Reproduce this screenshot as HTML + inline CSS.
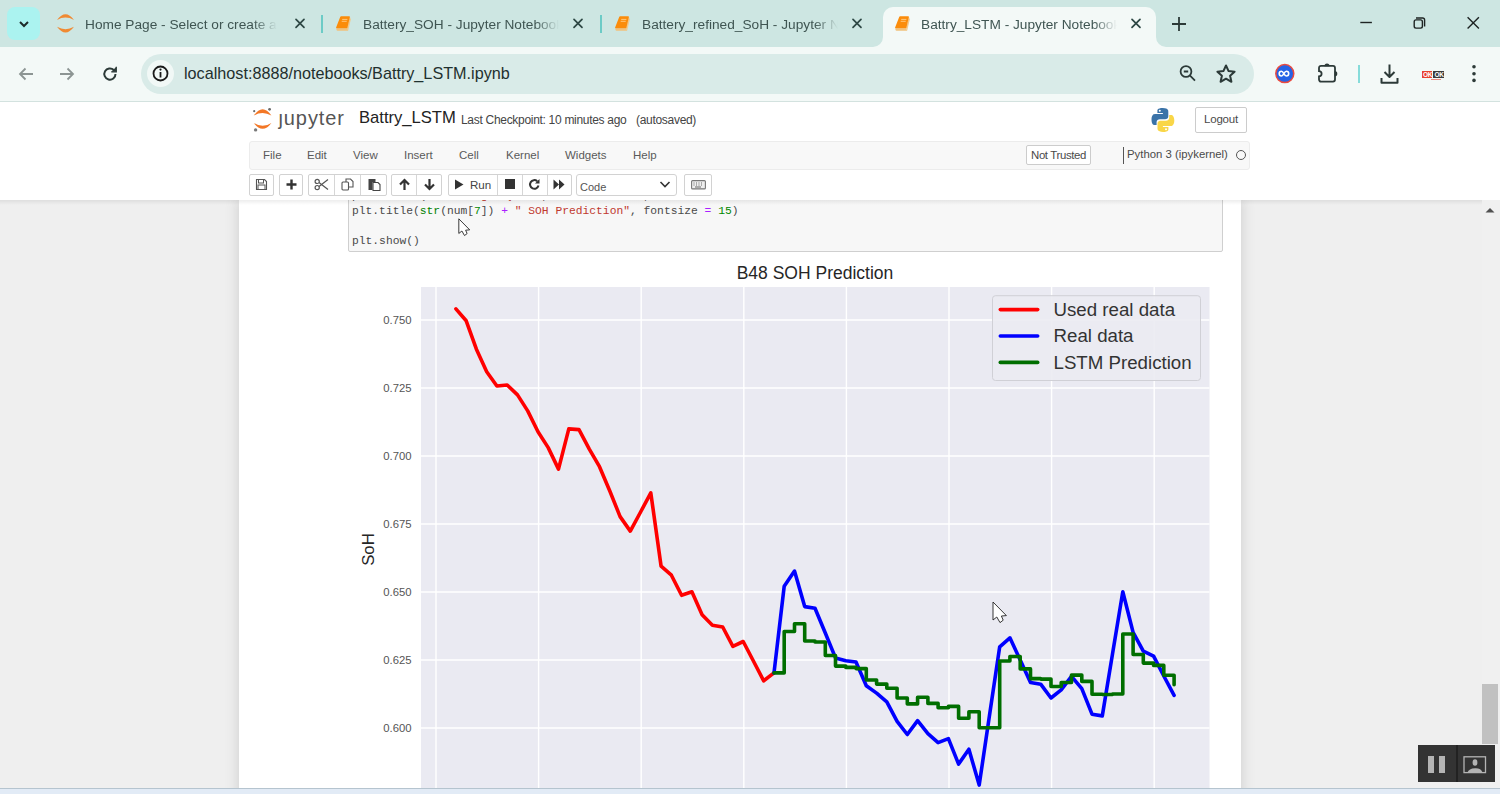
<!DOCTYPE html>
<html><head><meta charset="utf-8">
<style>
*{box-sizing:border-box}
html,body{margin:0;padding:0}
body{width:1500px;height:794px;overflow:hidden;position:relative;background:#eeeeee;font-family:"Liberation Sans",sans-serif}
.abs{position:absolute}
#tabstrip{left:0;top:0;width:1500px;height:47px;background:#cde6e2}
#toolbar{left:0;top:47px;width:1500px;height:55px;background:#f3f9f7;border-bottom:1px solid #d3e2df}
.tabtxt{position:absolute;top:16px;-webkit-mask-image:linear-gradient(90deg,#000 calc(100% - 24px),transparent);mask-image:linear-gradient(90deg,#000 calc(100% - 24px),transparent);font-size:13.7px;color:#3f5552;white-space:nowrap;overflow:hidden;line-height:18px}
.sep{position:absolute;top:15px;width:2px;height:18px;background:#6ccbc6}
#omni{left:141px;top:54px;width:1113px;height:40px;border-radius:20px;background:#d9ebe8}
#jhdr{left:0;top:102px;width:1500px;height:98px;background:#fff}
#menubar{left:249px;top:141px;width:1001px;height:29px;background:#f8f8f8;border:1px solid #ececec;border-radius:3px}
.mi{position:absolute;top:6px;font-size:11.5px;color:#5a5a5a;line-height:14px}
.btn{position:absolute;top:174px;height:22px;border:1px solid #d2d2d2;border-radius:2px;background:#fff}
#site{left:0;top:200px;width:1500px;height:588px;background:#efefef}
#container{left:239px;top:200px;width:1002px;height:588px;background:#fff;box-shadow:0 0 12px 1px rgba(87,87,87,0.2)}
#code{left:348px;top:180px;width:874px;height:72px;background:#f7f7f7;border:1px solid #cfcfcf;border-radius:2px}
.code{position:absolute;font-family:"Liberation Mono",monospace;font-size:11.3px;color:#4a4a4a;white-space:pre;line-height:15px}
#bottom{left:0;top:788px;width:1500px;height:6px;background:#e2ebf6;border-top:1px solid #b5c4cf}
</style></head><body>
<div id="tabstrip" class="abs">
  <div class="abs" style="left:7px;top:7px;width:33px;height:33px;border-radius:8px;background:#abf3f0"></div>
  <svg class="abs" style="left:16px;top:16px" width="16" height="16" viewBox="0 0 16 16"><path d="M4 6l4 4 4-4" fill="none" stroke="#1d2b2a" stroke-width="2"/></svg>
  <!-- tab1 -->
  <svg class="abs" style="left:56px;top:14px" width="19" height="19" viewBox="0 0 19 19"><path d="M1 6Q9.5 -5.5 18 6Q9.5 1.2 1 6z" fill="#f08a33"/><path d="M1 12.8Q9.5 24.3 18 12.8Q9.5 17.6 1 12.8z" fill="#f08a33"/></svg>
  <div class="tabtxt" style="left:85px;width:192px">Home Page - Select or create a</div>
  <div class="abs" style="left:292px;top:16px;width:16px;height:16px;font-size:0"><svg width="16" height="16" viewBox="0 0 16 16"><path d="M4 3.4l8 8M12 3.4l-8 8" stroke="#2d4744" stroke-width="1.7" stroke-linecap="round"/></svg></div>
  <div class="sep" style="left:321px"></div>
  <!-- tab2 -->
  <svg class="abs book" style="left:333px;top:15px" width="19" height="18" viewBox="0 0 19 18"><path d="M16.8 1.6L17.8 4.6L15.2 15.6L14.2 13z" fill="#f3c88a"/><path d="M3.4 13.2H14.3L15.2 15.8H4.4a1.2 1.2 0 0 1-1-1.2z" fill="#f1c27e"/><path d="M8.2 1.2H16.2a.7.7 0 0 1 .7.8L14.3 13.2H3.6a.6.6 0 0 1-.5-.7L7.3 1.8a.9.9 0 0 1 .9-.6z" fill="#fb8c0a"/><path d="M9.2 4.4h5.2M8.7 6.3h5" stroke="#ffcf8a" stroke-width="0.9"/></svg>
  <div class="tabtxt" style="left:363px;width:196px">Battery_SOH - Jupyter Notebook</div>
  <div class="abs" style="left:570px;top:16px;width:16px;height:16px;font-size:0"><svg width="16" height="16" viewBox="0 0 16 16"><path d="M4 3.4l8 8M12 3.4l-8 8" stroke="#2d4744" stroke-width="1.7" stroke-linecap="round"/></svg></div>
  <div class="sep" style="left:600px"></div>
  <!-- tab3 -->
  <svg class="abs book" style="left:612px;top:15px" width="19" height="18" viewBox="0 0 19 18"><path d="M16.8 1.6L17.8 4.6L15.2 15.6L14.2 13z" fill="#f3c88a"/><path d="M3.4 13.2H14.3L15.2 15.8H4.4a1.2 1.2 0 0 1-1-1.2z" fill="#f1c27e"/><path d="M8.2 1.2H16.2a.7.7 0 0 1 .7.8L14.3 13.2H3.6a.6.6 0 0 1-.5-.7L7.3 1.8a.9.9 0 0 1 .9-.6z" fill="#fb8c0a"/><path d="M9.2 4.4h5.2M8.7 6.3h5" stroke="#ffcf8a" stroke-width="0.9"/></svg>
  <div class="tabtxt" style="left:642px;width:196px">Battery_refined_SoH - Jupyter Notebook</div>
  <div class="abs" style="left:849px;top:16px;width:16px;height:16px;font-size:0"><svg width="16" height="16" viewBox="0 0 16 16"><path d="M4 3.4l8 8M12 3.4l-8 8" stroke="#2d4744" stroke-width="1.7" stroke-linecap="round"/></svg></div>
  <!-- active tab -->
  <div class="abs" style="left:883px;top:7px;width:273px;height:40px;background:#f3f9f7;border-radius:10px 10px 0 0"></div>
  <svg class="abs" style="left:873px;top:37px" width="10" height="10" viewBox="0 0 10 10"><path d="M0 10A10 10 0 0 0 10 0V10z" fill="#f3f9f7"/></svg>
  <svg class="abs" style="left:1156px;top:37px" width="10" height="10" viewBox="0 0 10 10"><path d="M10 10A10 10 0 0 1 0 0V10z" fill="#f3f9f7"/></svg>
  <svg class="abs book" style="left:892px;top:15px" width="19" height="18" viewBox="0 0 19 18"><path d="M16.8 1.6L17.8 4.6L15.2 15.6L14.2 13z" fill="#f3c88a"/><path d="M3.4 13.2H14.3L15.2 15.8H4.4a1.2 1.2 0 0 1-1-1.2z" fill="#f1c27e"/><path d="M8.2 1.2H16.2a.7.7 0 0 1 .7.8L14.3 13.2H3.6a.6.6 0 0 1-.5-.7L7.3 1.8a.9.9 0 0 1 .9-.6z" fill="#fb8c0a"/><path d="M9.2 4.4h5.2M8.7 6.3h5" stroke="#ffcf8a" stroke-width="0.9"/></svg>
  <div class="tabtxt" style="left:921px;width:196px">Battry_LSTM - Jupyter Notebook</div>
  <div class="abs" style="left:1128px;top:16px;width:16px;height:16px;font-size:0"><svg width="16" height="16" viewBox="0 0 16 16"><path d="M4 3.4l8 8M12 3.4l-8 8" stroke="#2d4744" stroke-width="1.7" stroke-linecap="round"/></svg></div>
  <svg class="abs" style="left:1170px;top:15px" width="18" height="18" viewBox="0 0 18 18"><path d="M9 2v14M2 9h14" stroke="#2c3a38" stroke-width="1.8"/></svg>
  <svg class="abs" style="left:1357px;top:14px" width="18" height="18" viewBox="0 0 18 18"><path d="M3.3 8.5H14.9" stroke="#1e2423" stroke-width="1.4"/></svg>
  <svg class="abs" style="left:1409px;top:14px" width="18" height="18" viewBox="0 0 18 18"><rect x="5.2" y="5.9" width="8.2" height="8.2" rx="1.8" fill="none" stroke="#1e2423" stroke-width="1.4"/><path d="M7 4H13.6a2 2 0 0 1 2 2V12.5" fill="none" stroke="#1e2423" stroke-width="1.4"/></svg>
  <svg class="abs" style="left:1463px;top:14px" width="18" height="18" viewBox="0 0 18 18"><path d="M4.6 3.3l11.3 11.3M15.9 3.3L4.6 14.6" stroke="#1e2423" stroke-width="1.4"/></svg>
</div>
<div id="toolbar" class="abs">
  <svg class="abs" style="left:16px;top:17px" width="20" height="20" viewBox="0 0 20 20"><path d="M17 10H4M9.5 4.5L4 10l5.5 5.5" fill="none" stroke="#8c9593" stroke-width="1.8"/></svg>
  <svg class="abs" style="left:57px;top:17px" width="20" height="20" viewBox="0 0 20 20"><path d="M3 10h13M10.5 4.5L16 10l-5.5 5.5" fill="none" stroke="#8c9593" stroke-width="1.8"/></svg>
  <svg class="abs" style="left:100px;top:17px" width="20" height="20" viewBox="0 0 20 20"><path d="M15.5 10A5.6 5.6 0 1 1 13.8 6" fill="none" stroke="#2c3a38" stroke-width="2"/><path d="M16.3 2.8v5H11.3" fill="#2c3a38" stroke="#2c3a38" stroke-width="1.2"/></svg>
</div>
<div id="omni" class="abs">
  <div class="abs" style="left:6px;top:6px;width:27px;height:27px;border-radius:50%;background:#f1f8f6"></div>
  <svg class="abs" style="left:11px;top:11px" width="17" height="17" viewBox="0 0 17 17"><circle cx="8.5" cy="8.5" r="7" fill="none" stroke="#1a1a1a" stroke-width="1.8"/><path d="M8.5 7v5.5" stroke="#1a1a1a" stroke-width="1.8"/><circle cx="8.5" cy="4.6" r="1.1" fill="#1a1a1a"/></svg>
  <div class="abs" style="left:43px;top:10px;font-size:16.2px;color:#1f302e;white-space:nowrap;line-height:19px">localhost:8888/notebooks/Battry_LSTM.ipynb</div>
  <svg class="abs" style="left:1037px;top:10px" width="20" height="20" viewBox="0 0 20 20"><circle cx="8" cy="7.5" r="5.4" fill="none" stroke="#2c3a38" stroke-width="1.8"/><path d="M11.8 11.4l5.2 5.2M5.8 7.5h4.4" stroke="#2c3a38" stroke-width="1.8"/></svg>
  <svg class="abs" style="left:1074px;top:9px" width="22" height="22" viewBox="0 0 22 22"><path d="M11 2.5l2.6 5.6 6 .6-4.5 4.1 1.3 6L11 15.7l-5.4 3.1 1.3-6L2.4 8.7l6-.6z" fill="none" stroke="#2c3a38" stroke-width="2" stroke-linejoin="round"/></svg>
</div>

<!-- toolbar right icons -->
<svg class="abs" style="left:1274px;top:63px" width="22" height="22" viewBox="0 0 22 22"><circle cx="10.8" cy="10.6" r="9" fill="#2563e6" stroke="#ea4a3f" stroke-width="1.5"/><path d="M4.6 10.6c0-1.7 1-2.4 2.3-2.4 2.1 0 2.6 4.8 4.9 4.8 1.2 0 2.3-.7 2.3-2.4s-1.1-2.4-2.3-2.4c-2.3 0-2.8 4.8-4.9 4.8-1.3 0-2.3-.7-2.3-2.4z" transform="translate(0.6 0) scale(1.0)" fill="none" stroke="#fff" stroke-width="1.6"/></svg>
<svg class="abs" style="left:1316px;top:62px" width="24" height="24" viewBox="0 0 24 24"><path d="M5 3.9H17a2 2 0 0 1 2 2V17.6a2 2 0 0 1-2 2H5a2 2 0 0 1-2-2V14.3a2.6 2.6 0 0 0 0-5.2V5.9a2 2 0 0 1 2-2z" fill="none" stroke="#2c3a38" stroke-width="1.8"/><path d="M8.4 4.2a2.6 2.6 0 0 1 5.2 0z" fill="#2c3a38"/><path d="M18.7 9.1a2.6 2.6 0 0 1 0 5.2z" fill="#2c3a38"/></svg>
<div class="abs" style="left:1357.5px;top:65px;width:2px;height:18px;background:#86dcda"></div>
<svg class="abs" style="left:1379px;top:63px" width="22" height="22" viewBox="0 0 22 22"><path d="M10.5 1.5v12.5M5.5 9L10.5 14l5-5M2.5 15v4.8h16V15" fill="none" stroke="#2c3a38" stroke-width="2" stroke-linejoin="round"/></svg>
<div class="abs" style="left:1422px;top:70.5px;width:10px;height:7.5px;background:#e8402f"></div>
<div class="abs" style="left:1433px;top:70.5px;width:10.5px;height:7.5px;background:#3c3c3c"></div>
<div class="abs" style="left:1423px;top:71px;font-size:6.5px;font-weight:bold;color:#fff;line-height:7px;letter-spacing:-0.3px">OK</div>
<div class="abs" style="left:1434.5px;top:71px;font-size:6.5px;font-weight:bold;color:#fff;line-height:7px;letter-spacing:-0.3px">OK</div>
<div class="abs" style="left:1431px;top:78.5px;width:10px;height:1px;background:#e98a80"></div>
<svg class="abs" style="left:1464px;top:63px" width="20" height="22" viewBox="0 0 20 22"><circle cx="10" cy="3.8" r="1.8" fill="#2c3a38"/><circle cx="10" cy="10.7" r="1.8" fill="#2c3a38"/><circle cx="10" cy="17.4" r="1.8" fill="#2c3a38"/></svg>
<!-- jupyter header -->
<div id="jhdr" class="abs"></div>
<svg class="abs" style="left:252px;top:107px" width="22" height="26" viewBox="0 0 22 26"><path d="M1.8 8.6Q10.6 -4 19.4 8.6Q10.6 3.6 1.8 8.6z" fill="#f37726"/><path d="M1.8 15.9Q10.6 27.7 19.4 15.9Q10.6 21.7 1.8 15.9z" fill="#f37726"/><circle cx="2.2" cy="4.2" r="1.1" fill="#6b6b6b"/><circle cx="17.6" cy="2.3" r="1.4" fill="#6b6b6b"/><circle cx="3.6" cy="22.9" r="1.7" fill="#7a7a7a"/></svg>
<div class="abs" style="left:278.5px;top:106px;font-size:20px;color:#555;letter-spacing:0.9px;line-height:24px">&#567;upyter</div>
<div class="abs" style="left:359px;top:108px;font-size:16.6px;color:#222;line-height:20px;white-space:nowrap">Battry_LSTM</div>
<div class="abs" style="left:461px;top:113px;font-size:12px;color:#444;line-height:14px;white-space:nowrap;letter-spacing:-0.3px">Last Checkpoint: 10 minutes ago</div>
<div class="abs" style="left:636px;top:113px;font-size:12px;color:#444;line-height:14px;white-space:nowrap;letter-spacing:-0.3px">(autosaved)</div>
<svg class="abs" style="left:1150px;top:107px" width="26" height="26" viewBox="0 0 26 26"><path d="M12.8 1C7 1 7.4 3.5 7.4 3.5v2.6h5.5v.8H5.2S1.5 6.5 1.5 12.4s3.2 5.7 3.2 5.7h1.9v-2.7s-.1-3.2 3.2-3.2h5.5s3 .05 3-2.9V4.4S18.8 1 12.8 1zm-3 1.7a1 1 0 1 1 0 2 1 1 0 0 1 0-2z" fill="#3a73a8"/><path d="M13 25c5.8 0 5.4-2.5 5.4-2.5v-2.6h-5.5v-.8h7.7s3.7.4 3.7-5.5-3.2-5.7-3.2-5.7h-1.9v2.7s.1 3.2-3.2 3.2H10.5s-3-.05-3 2.9v4.9S7 25 13 25zm3-1.7a1 1 0 1 1 0-2 1 1 0 0 1 0 2z" fill="#f9d648"/></svg>
<div class="abs" style="left:1195px;top:107px;width:52px;height:26px;border:1px solid #ccc;border-radius:2px;background:#fff"></div>
<div class="abs" style="left:1204px;top:112px;font-size:11.5px;color:#4a4a4a;line-height:14px;letter-spacing:-0.2px">Logout</div>

<div id="menubar" class="abs">
  <div class="mi" style="left:13px">File</div>
  <div class="mi" style="left:57px">Edit</div>
  <div class="mi" style="left:103px">View</div>
  <div class="mi" style="left:154px">Insert</div>
  <div class="mi" style="left:209px">Cell</div>
  <div class="mi" style="left:256px">Kernel</div>
  <div class="mi" style="left:315px">Widgets</div>
  <div class="mi" style="left:383px">Help</div>
  <div class="abs" style="left:776px;top:3px;width:65px;height:20px;border:1px solid #ccc;border-radius:2px;background:#fff"></div>
  <div class="mi" style="left:781px;top:5.5px;font-size:11.4px;color:#4a4a4a;letter-spacing:-0.35px">Not Trusted</div>
  <div class="abs" style="left:873px;top:5px;width:1px;height:17px;background:#555"></div>
  <div class="mi" style="left:877px;top:5px;font-size:11.35px;color:#4a4a4a">Python 3 (ipykernel)</div>
  <div class="abs" style="left:986px;top:8px;width:10px;height:10px;border:1.8px solid #555;border-radius:50%"></div>
</div>

<!-- toolbar buttons -->
<div class="btn" style="left:249px;width:25px"></div>
<svg class="abs" style="left:255px;top:178px" width="13" height="13" viewBox="0 0 13 13"><path d="M1.5 1.5h8l2 2v8h-10z" fill="none" stroke="#555" stroke-width="1.1"/><rect x="3.5" y="1.5" width="5" height="3.5" fill="none" stroke="#555" stroke-width="1"/><rect x="3" y="7" width="7" height="4.5" fill="none" stroke="#555" stroke-width="1"/></svg>
<div class="btn" style="left:279px;width:24px"></div>
<svg class="abs" style="left:285px;top:178px" width="13" height="13" viewBox="0 0 13 13"><path d="M6.5 1.5v10M1.5 6.5h10" stroke="#333" stroke-width="2.4"/></svg>
<div class="btn" style="left:308px;width:79px"></div>
<div class="abs" style="left:334px;top:175px;width:1px;height:20px;background:#d6d6d6"></div>
<div class="abs" style="left:360px;top:175px;width:1px;height:20px;background:#d6d6d6"></div>
<svg class="abs" style="left:314px;top:178px" width="15" height="13" viewBox="0 0 15 13"><circle cx="3.2" cy="3.4" r="2.1" fill="none" stroke="#555" stroke-width="1.2"/><circle cx="3.2" cy="9.6" r="2.1" fill="none" stroke="#555" stroke-width="1.2"/><path d="M5 4.5L14 11.5M5 8.5L14 1.5" stroke="#555" stroke-width="1.2"/></svg>
<svg class="abs" style="left:341px;top:178px" width="13" height="13" viewBox="0 0 13 13"><rect x="1" y="4" width="6.5" height="8" rx="1" fill="none" stroke="#555" stroke-width="1.1"/><path d="M5 4V1h4.5l2.5 2.5V9H7.5" fill="none" stroke="#555" stroke-width="1.1"/></svg>
<svg class="abs" style="left:367px;top:178px" width="14" height="13" viewBox="0 0 14 13"><path d="M1.5 1h7v3h-3v8h-4z" fill="#444"/><path d="M6 4.5h5l2 2v6H6z" fill="#fff" stroke="#444" stroke-width="1.1"/></svg>
<div class="btn" style="left:391px;width:51px"></div>
<div class="abs" style="left:416px;top:175px;width:1px;height:20px;background:#d6d6d6"></div>
<svg class="abs" style="left:398px;top:178px" width="13" height="13" viewBox="0 0 13 13"><path d="M6.5 12V2M2 6.5l4.5-4.5 4.5 4.5" fill="none" stroke="#333" stroke-width="2.2"/></svg>
<svg class="abs" style="left:423px;top:178px" width="13" height="13" viewBox="0 0 13 13"><path d="M6.5 1v10M2 6.5l4.5 4.5 4.5-4.5" fill="none" stroke="#333" stroke-width="2.2"/></svg>
<div class="btn" style="left:448px;width:124px"></div>
<div class="abs" style="left:497px;top:175px;width:1px;height:20px;background:#d6d6d6"></div>
<div class="abs" style="left:522px;top:175px;width:1px;height:20px;background:#d6d6d6"></div>
<div class="abs" style="left:547px;top:175px;width:1px;height:20px;background:#d6d6d6"></div>
<svg class="abs" style="left:454px;top:179px" width="10" height="11" viewBox="0 0 10 11"><path d="M1 0.5l8.5 5-8.5 5z" fill="#333"/></svg>
<div class="abs" style="left:470px;top:178px;font-size:11.6px;color:#444;line-height:14px">Run</div>
<div class="abs" style="left:505px;top:179px;width:10px;height:10px;background:#333"></div>
<svg class="abs" style="left:528px;top:178px" width="13" height="13" viewBox="0 0 13 13"><path d="M10.5 7.5A4.3 4.3 0 1 1 9.2 3.2" fill="none" stroke="#333" stroke-width="2"/><path d="M11.5 1v4.5H7z" fill="#333"/></svg>
<svg class="abs" style="left:553px;top:179px" width="12" height="11" viewBox="0 0 12 11"><path d="M0.5 0.5l5.5 5-5.5 5zM6 0.5l5.5 5-5.5 5z" fill="#333"/></svg>
<div class="btn" style="left:576px;width:101px;border-radius:3px"></div>
<div class="abs" style="left:580px;top:180px;font-size:11px;color:#555;line-height:14px">Code</div>
<svg class="abs" style="left:659px;top:180px" width="12" height="9" viewBox="0 0 12 9"><path d="M1.5 2l4.5 4.5L10.5 2" fill="none" stroke="#333" stroke-width="1.6"/></svg>
<div class="btn" style="left:684px;width:28px"></div>
<svg class="abs" style="left:691px;top:180px" width="15" height="10" viewBox="0 0 15 10"><rect x="0.6" y="0.6" width="13.8" height="8.3" rx="1" fill="#eee" stroke="#777" stroke-width="1.1"/><path d="M2.5 3h1M5 3h1M7.5 3h1M10 3h1M2.5 5h1M5 5h1M7.5 5h1M10 5h1M4 7h6" stroke="#666" stroke-width="1"/></svg>


<!-- notebook -->
<div id="site" class="abs" style="overflow:hidden">
  <div class="abs" style="left:239px;top:0;width:1002px;height:600px;background:#fff;box-shadow:0 0 12px 1px rgba(87,87,87,0.2)"></div>
  <div class="abs" style="left:348px;top:-60px;width:875px;height:112px;background:#f7f7f7;border:1px solid #cfcfcf;border-radius:2px">
    <div class="code" style="left:3px;top:48px">plt.xxxxxx(xxxxxxxx<span style="color:#c0392f">gxxxy</span>xxxx,xxxxxxxxxxxxxx,</div>
    <div class="code" style="left:3px;top:63px">plt.title(<span style="color:#008000">str</span>(num[<span style="color:#080">7</span>]) <span style="color:#aa22ff">+</span> <span style="color:#c0392f">" SOH Prediction"</span>, fontsize <span style="color:#aa22ff">=</span> <span style="color:#080">15</span>)</div>
    <div class="code" style="left:3px;top:93px">plt.show()</div>
  </div>
  <svg class="abs" style="left:0;top:-200px" width="1500" height="1000" viewBox="0 0 1500 1000">
    <rect x="421" y="287" width="788.5" height="520" fill="#eaeaf2"/>
    <g stroke="#ffffff" stroke-width="1.4">
      <path d="M436 287V800M538.6 287V800M641.2 287V800M743.8 287V800M846.4 287V800M949 287V800M1051.6 287V800M1154.2 287V800"/>
      <path d="M421 320H1209.5M421 388H1209.5M421 456H1209.5M421 524H1209.5M421 592H1209.5M421 660H1209.5M421 728H1209.5"/>
    </g>
    <g fill="none" stroke-width="3.6" stroke-linejoin="round" stroke-linecap="round">
<polyline points="455.9,308.9 466.2,320.8 476.4,349.2 486.7,371.7 496.9,386.0 507.2,385.0 517.5,394.9 527.7,410.9 538.0,431.7 548.2,447.6 558.5,469.1 568.8,428.9 579.0,429.6 589.3,449.2 599.5,466.7 609.8,491.0 620.1,516.6 630.3,531.1 640.6,512.0 650.8,492.9 661.1,566.2 671.4,575.2 681.6,595.3 691.9,591.8 702.1,614.7 712.4,625.2 722.7,627.0 732.9,646.4 743.2,641.5 753.4,661.0 763.7,680.8 774.0,672.9" stroke="#ff0000"/>
<polyline points="774.0,672.9 784.2,586.2 794.5,571.1 804.7,606.6 815.0,608.2 825.3,633.0 835.5,657.9 845.8,660.7 856.0,662.0 866.3,685.7 876.6,693.1 886.8,701.9 897.1,721.4 907.3,734.5 917.6,720.6 927.9,733.6 938.1,742.7 948.4,738.6 958.6,764.1 968.9,749.2 979.2,785.1 989.4,716.0 999.7,646.8 1009.9,637.8 1020.2,660.0 1030.5,682.5 1040.7,684.2 1051.0,698.0 1061.2,689.9 1071.5,676.3 1081.8,688.7 1092.0,714.2 1102.3,715.9 1112.5,654.0 1122.8,591.8 1133.1,632.4 1143.3,651.2 1153.6,656.1 1163.8,676.0 1174.1,695.4" stroke="#0000ff"/>
<polyline points="774.0,672.9 784.2,672.9 784.2,631.5 794.5,631.5 794.5,623.8 804.7,623.8 804.7,641.0 815.0,641.0 815.0,642.0 825.3,642.0 825.3,655.5 835.5,655.5 835.5,666.1 845.8,666.1 845.8,667.4 856.0,667.4 856.0,668.6 866.3,668.6 866.3,680.0 876.6,680.0 876.6,684.1 886.8,684.1 886.8,688.2 897.1,688.2 897.1,698.0 907.3,698.0 907.3,703.9 917.6,703.9 917.6,697.3 927.9,697.3 927.9,703.4 938.1,703.4 938.1,707.8 948.4,707.8 948.4,706.4 958.6,706.4 958.6,718.2 968.9,718.2 968.9,711.7 979.2,711.7 979.2,727.8 989.4,727.8 989.4,727.8 999.7,727.8 999.7,661.0 1009.9,661.0 1009.9,656.5 1020.2,656.5 1020.2,668.9 1030.5,668.9 1030.5,678.6 1040.7,678.6 1040.7,679.1 1051.0,679.1 1051.0,686.5 1061.2,686.5 1061.2,682.5 1071.5,682.5 1071.5,675.1 1081.8,675.1 1081.8,681.4 1092.0,681.4 1092.0,694.2 1102.3,694.2 1102.3,694.5 1112.5,694.5 1112.5,694.0 1122.8,694.0 1122.8,634.0 1133.1,634.0 1133.1,654.5 1143.3,654.5 1143.3,663.1 1153.6,663.1 1153.6,665.4 1163.8,665.4 1163.8,675.2 1174.1,675.2 1174.1,684.7" stroke="#006e00"/>
    </g>
    <g font-family="Liberation Sans" font-size="11.3" fill="#555" text-anchor="end">
      <text x="411.5" y="324.2">0.750</text>
      <text x="411.5" y="392.2">0.725</text>
      <text x="411.5" y="460.2">0.700</text>
      <text x="411.5" y="528.2">0.675</text>
      <text x="411.5" y="596.2">0.650</text>
      <text x="411.5" y="664.2">0.625</text>
      <text x="411.5" y="732.2">0.600</text>
    </g>
    <text x="815" y="279.2" font-family="Liberation Sans" font-size="17.5" fill="#262626" text-anchor="middle">B48 SOH Prediction</text>
    <text transform="translate(374,549.5) rotate(-90)" font-family="Liberation Sans" font-size="16.8" fill="#262626" text-anchor="middle">SoH</text>
    <rect x="992.5" y="295.7" width="208" height="84.8" rx="3" fill="#ebebf2" fill-opacity="0.9" stroke="#d0d0d6" stroke-width="1"/>
    <g stroke-width="3.6" stroke-linecap="round">
      <path d="M1000.3 309.6H1037.7" stroke="#ff0000"/>
      <path d="M1000.3 336H1037.7" stroke="#0000ff"/>
      <path d="M1000.3 362.4H1037.7" stroke="#006e00"/>
    </g>
    <g font-family="Liberation Sans" font-size="18.7" fill="#333">
      <text x="1053.5" y="316">Used real data</text>
      <text x="1053.5" y="342.4">Real data</text>
      <text x="1053.5" y="368.8">LSTM Prediction</text>
    </g>
  </svg>
</div>
<div class="abs" style="left:0;top:200px;width:1500px;height:5px;background:linear-gradient(rgba(0,0,0,0.07),rgba(0,0,0,0))"></div>
<!-- scrollbar -->
<div class="abs" style="left:1482px;top:200px;width:18px;height:588px;background:#f0f0f0"></div>
<svg class="abs" style="left:1484px;top:205px" width="12" height="10" viewBox="0 0 12 10"><path d="M1.5 7.5L6 3l4.5 4.5z" fill="#505050"/></svg>
<div class="abs" style="left:1482px;top:684px;width:16px;height:60px;background:#c1c1c1"></div>
<!-- cursors -->
<svg class="abs" style="left:458.3px;top:218.3px" width="13" height="18.7" viewBox="-1 -1 16 23"><path d="M0 0L13.4 13.6L8.4 14L10.2 18.2L7 20.6L3.8 15L0 18Z" fill="#fff" stroke="#222" stroke-width="1.1" stroke-linejoin="round"/></svg>
<svg class="abs" style="left:992.3px;top:601.1px" width="16" height="23" viewBox="-1 -1 16 23"><path d="M0 0L13.4 13.6L8.4 14L10.2 18.2L7 20.6L3.8 15L0 18Z" fill="#fff" stroke="#222" stroke-width="0.9" stroke-linejoin="round"/></svg>
<!-- video overlay -->
<div class="abs" style="left:1418px;top:745px;width:77px;height:37px;background:#333333"></div>
<div class="abs" style="left:1456px;top:745px;width:1.5px;height:37px;background:#222"></div>
<div class="abs" style="left:1428px;top:756px;width:6px;height:17px;background:#b4b4b4"></div>
<div class="abs" style="left:1439px;top:756px;width:6px;height:17px;background:#b4b4b4"></div>
<svg class="abs" style="left:1463px;top:756px" width="24" height="18" viewBox="0 0 24 18"><rect x="1" y="0.8" width="21.5" height="15.8" fill="none" stroke="#b4b4b4" stroke-width="1.3"/><ellipse cx="12" cy="6.5" rx="2.4" ry="3.3" fill="#b4b4b4"/><path d="M4.5 16.5c.8-2.8 3.5-4 7.5-4.2s6.7 1.4 7.5 4.2z" fill="#b4b4b4"/></svg>
<div id="bottom" class="abs"></div>
</body></html>
